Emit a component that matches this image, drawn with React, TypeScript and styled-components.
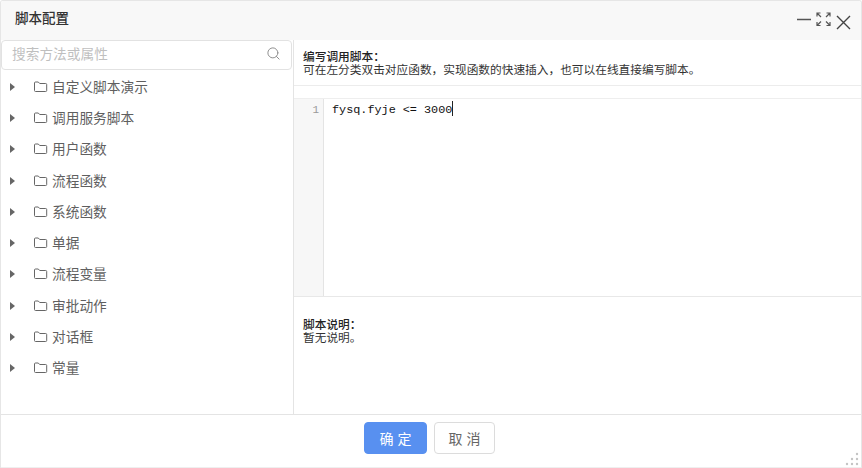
import React from 'react';
import styled, { createGlobalStyle } from 'styled-components';
import { Search } from 'lucide-react';

const GlobalStyle = createGlobalStyle`
  html, body {
    margin: 0;
    padding: 0;
    background: #ffffff;
  }
  body {
    font-family: "Liberation Sans", "Noto Sans CJK SC", sans-serif;
  }
`;

const Dialog = styled.div`
  position: relative;
  box-sizing: border-box;
  width: 862px;
  height: 468px;
  display: flex;
  flex-direction: column;
  background: #fff;
  border: 1px solid #e6e6e6;
  border-bottom: none;
  border-radius: 3px 3px 0 0;
  overflow: hidden;
`;

const Header = styled.div`
  height: 39px;
  flex-shrink: 0;
  box-sizing: border-box;
  display: flex;
  align-items: center;
  justify-content: space-between;
  padding: 0 10px 7px 14px;
  background: #f8f8f8;
`;

const Title = styled.div`
  font-size: 13.5px;
  font-weight: 500;
  color: #333;
`;

const WindowTools = styled.div`
  display: flex;
  align-items: flex-start;
  gap: 5px;
  margin-top: 7px;
`;

const Body = styled.div`
  flex: 1;
  min-height: 0;
  display: flex;
`;

const LeftPane = styled.div`
  width: 293px;
  flex-shrink: 0;
  box-sizing: border-box;
  border-right: 1px solid #e4e4e4;
`;

const SearchBox = styled.div`
  box-sizing: border-box;
  height: 30px;
  margin-right: 1px;
  display: flex;
  align-items: center;
  justify-content: space-between;
  padding: 0 10px 4px 10px;
  border: 1px solid #e2e2e2;
  border-radius: 4px;
  background: #fff;
  font-size: 13.7px;
  color: #bfbfbf;
`;

const Tree = styled.ul`
  list-style: none;
  margin: 0;
  padding: 0.3px 0 0;
`;

const TreeRow = styled.li`
  height: 31.25px;
  display: flex;
  align-items: center;
  padding-left: 9px;
  font-size: 13.7px;
  color: #5f5f5f;
`;

const Caret = styled.span`
  width: 0;
  height: 0;
  margin-top: 2px;
  margin-right: 18px;
  border-left: 5px solid #666;
  border-top: 4px solid transparent;
  border-bottom: 4px solid transparent;
`;

const FolderIcon = styled.svg`
  width: 15px;
  height: 12px;
  margin-top: 2px;
  margin-right: 4px;
  fill: none;
  stroke: #666;
  stroke-width: 1;
`;

const RightPane = styled.div`
  flex: 1;
  min-width: 0;
  display: flex;
  flex-direction: column;
`;

const Hint = styled.div`
  height: 46px;
  flex-shrink: 0;
  box-sizing: border-box;
  padding: 9.5px 9px 0;
  border-bottom: 1px solid #ececec;
  font-size: 11.7px;
  line-height: 13px;
  color: #333;
`;

const HintTitle = styled.div`
  font-weight: 500;
  color: #222;
`;

const EditorWrap = styled.div`
  height: 199px;
  flex-shrink: 0;
  box-sizing: border-box;
  margin-top: 12px;
  display: flex;
  border-top: 1px solid #eeeeee;
  border-bottom: 1px solid #e8e8e8;
`;

const Gutter = styled.div`
  width: 30px;
  flex-shrink: 0;
  box-sizing: border-box;
  padding: 4px 4px 0 0;
  background: #f7f7f7;
  border-right: 1px solid #e4e4e4;
  text-align: right;
  font-family: "Liberation Mono", monospace;
  font-size: 11px;
  line-height: 14px;
  color: #999;
`;

const CodeLine = styled.div`
  padding: 2px 0 0 8px;
  font-family: "Liberation Mono", monospace;
  font-size: 11.8px;
  line-height: 14px;
  color: #111;
`;

const Cursor = styled.span`
  display: inline-block;
  width: 1px;
  height: 15px;
  margin-bottom: -3px;
  background: #222;
`;

const Note = styled.div`
  padding: 20.5px 9px 0;
  font-size: 11.7px;
  line-height: 13px;
  color: #333;
`;

const Footer = styled.div`
  height: 46px;
  flex-shrink: 0;
  box-sizing: content-box;
  display: flex;
  align-items: center;
  justify-content: center;
  gap: 7px;
  padding: 0 3px 6px 0;
  border-top: 1px solid #e4e4e4;
  border-bottom: 1px solid #efefef;
`;

const Button = styled.button<{ $primary?: boolean }>`
  box-sizing: border-box;
  width: ${(p) => (p.$primary ? '63px' : '61px')};
  height: 32px;
  padding: 0 0 1px 4px;
  border-radius: 4px;
  border: 1px solid ${(p) => (p.$primary ? '#5890f0' : '#dcdcdc')};
  background: ${(p) => (p.$primary ? '#5890f0' : '#fff')};
  color: ${(p) => (p.$primary ? '#fff' : '#666')};
  font-family: inherit;
  font-size: 14px;
  letter-spacing: 4px;
`;

const Grip = styled.svg`
  position: absolute;
  right: 2px;
  bottom: 2px;
  width: 14px;
  height: 14px;
  fill: #c4c4c4;
`;

const groups = ['自定义脚本演示', '调用服务脚本', '用户函数', '流程函数', '系统函数', '单据', '流程变量', '审批动作', '对话框', '常量'];

const App = () => {
  return (
    <>
      <GlobalStyle />
      <Dialog>
        <Header>
          <Title>脚本配置</Title>
          <WindowTools>
            <svg width="15" height="18" viewBox="0 0 15 18" stroke="#555" strokeWidth="1.4" fill="none">
              <path d="M1 7.500h14" />
            </svg>
            <svg width="15" height="18" viewBox="0 0 15 18" stroke="#555" strokeWidth="1.2" fill="none">
              <path d="M1 4.500V1h3.500M1 1l4 4M10.500 1H14v3.500M14 1l-4 4M1 10V13.500h3.500M1 13.500l4-4M14 10V13.500h-3.500M14 13.500l-4-4" />
            </svg>
            <svg width="15" height="18" viewBox="0 0 15 18" stroke="#444" strokeWidth="1.4" fill="none">
              <path d="M1 4l13 13M14 4L1 17" />
            </svg>
          </WindowTools>
        </Header>
        <Body>
          <LeftPane>
            <SearchBox>
              <span>搜索方法或属性</span>
              <Search size={15} color="#8f8f8f" strokeWidth={1.6} />
            </SearchBox>
            <Tree>
              {groups.map((name) => (
                <TreeRow key={name}>
                  <Caret />
                  <FolderIcon viewBox="0 0 15 12">
                    <path d="M1.500 2a1 1 0 0 1 1-1h2.800l1.400 1.500h6a1 1 0 0 1 1 1v6a1 1 0 0 1-1 1h-10.200a1 1 0 0 1-1-1z" />
                  </FolderIcon>
                  {name}
                </TreeRow>
              ))}
            </Tree>
          </LeftPane>
          <RightPane>
            <Hint>
              <HintTitle>编写调用脚本：</HintTitle>
              可在左分类双击对应函数，实现函数的快速插入，也可以在线直接编写脚本。
            </Hint>
            <EditorWrap>
              <Gutter>1</Gutter>
              <CodeLine>
                fysq.fyje &lt;= 3000
                <Cursor />
              </CodeLine>
            </EditorWrap>
            <Note>
              <HintTitle>脚本说明：</HintTitle>
              暂无说明。
            </Note>
          </RightPane>
        </Body>
        <Footer>
          <Button $primary>确定</Button>
          <Button>取消</Button>
        </Footer>
        <Grip viewBox="0 0 14 14">
          <circle cx="12" cy="2" r="1.2" />
          <circle cx="12" cy="7" r="1.2" />
          <circle cx="12" cy="12" r="1.2" />
          <circle cx="7" cy="7" r="1.2" />
          <circle cx="7" cy="12" r="1.2" />
          <circle cx="2" cy="12" r="1.2" />
        </Grip>
      </Dialog>
    </>
  );
};

export default App;
